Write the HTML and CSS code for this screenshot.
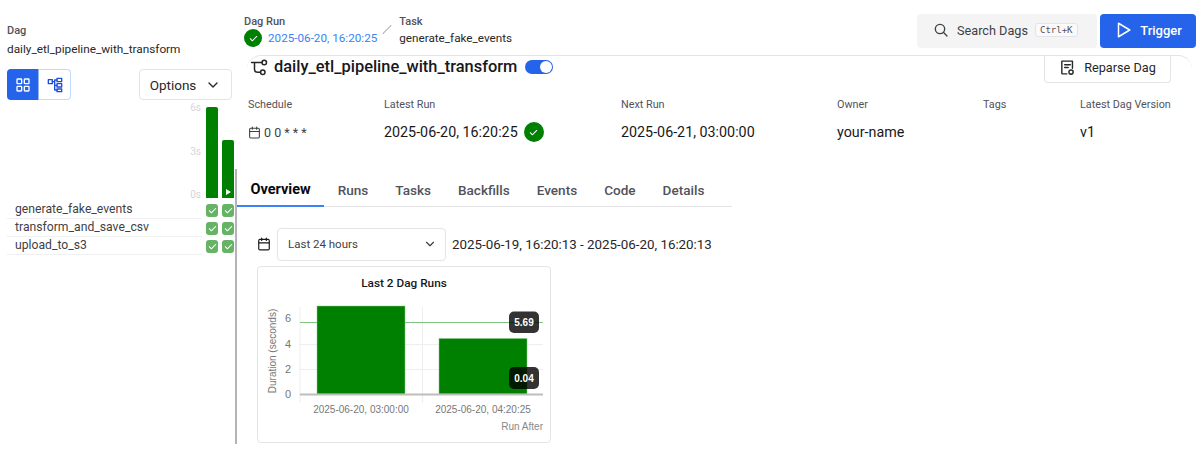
FILE: index.html
```html
<!DOCTYPE html>
<html lang="en">
<head>
  <meta charset="UTF-8">
  <title>daily_etl_pipeline_with_transform</title>
  <link rel="stylesheet" href="styles.css">
</head>
<body>
  <div class="app">
    <aside class="side">
      <div class="crumb-label">Dag</div>
      <div class="dag-name">daily_etl_pipeline_with_transform</div>

      <div class="side-tools">
        <div class="view-toggle">
          <button class="view-btn active" type="button">
            <svg viewBox="0 0 24 24" width="16" height="16" class="ico"><rect x="3" y="3" width="7" height="7" rx="1"/><rect x="14" y="3" width="7" height="7" rx="1"/><rect x="3" y="14" width="7" height="7" rx="1"/><rect x="14" y="14" width="7" height="7" rx="1"/></svg>
          </button>
          <button class="view-btn" type="button">
            <svg viewBox="0 0 24 24" width="16" height="16" class="ico"><rect x="2" y="4" width="6" height="6"/><rect x="15" y="2" width="7" height="5"/><rect x="15" y="10" width="7" height="5"/><rect x="15" y="18" width="7" height="4"/><path d="M8 7h3.500M11.500 4.500v15M11.500 4.500H15M11.500 12.500H15M11.500 19.500H15"/></svg>
          </button>
        </div>
        <button class="options-btn" type="button">Options
          <svg viewBox="0 0 24 24" width="16" height="16" class="ico"><path d="m6 9 6 6 6-6"/></svg>
        </button>
      </div>

      <div class="grid-chart">
        <div class="grid-axis"><span>6s</span><span>3s</span><span>0s</span></div>
        <div class="grid-bar tall"></div>
        <div class="grid-bar short"><span class="run-mark"></span></div>
      </div>

      <div class="task-list">
        <div class="task-row">
          <div class="task-name">generate_fake_events</div>
          <span class="task-state"><svg viewBox="0 0 24 24" class="tick"><path d="M5 12.500l4.500 4.500L19 7.500"/></svg></span>
          <span class="task-state"><svg viewBox="0 0 24 24" class="tick"><path d="M5 12.500l4.500 4.500L19 7.500"/></svg></span>
        </div>
        <div class="task-row">
          <div class="task-name">transform_and_save_csv</div>
          <span class="task-state"><svg viewBox="0 0 24 24" class="tick"><path d="M5 12.500l4.500 4.500L19 7.500"/></svg></span>
          <span class="task-state"><svg viewBox="0 0 24 24" class="tick"><path d="M5 12.500l4.500 4.500L19 7.500"/></svg></span>
        </div>
        <div class="task-row">
          <div class="task-name">upload_to_s3</div>
          <span class="task-state"><svg viewBox="0 0 24 24" class="tick"><path d="M5 12.500l4.500 4.500L19 7.500"/></svg></span>
          <span class="task-state"><svg viewBox="0 0 24 24" class="tick"><path d="M5 12.500l4.500 4.500L19 7.500"/></svg></span>
        </div>
      </div>
    </aside>

    <main class="main">
      <header class="topbar">
        <div class="crumb">
          <div class="crumb-label">Dag Run</div>
          <div class="crumb-value">
            <span class="state-dot small"><svg viewBox="0 0 24 24" class="tick"><path d="M5 12.500l4.500 4.500L19 7.500"/></svg></span>
            <a class="run-link" href="#">2025-06-20, 16:20:25</a>
          </div>
        </div>
        <div class="crumb-sep"></div>
        <div class="crumb">
          <div class="crumb-label">Task</div>
          <div class="crumb-value task-value">generate_fake_events</div>
        </div>
        <button class="search-btn" type="button">
          <svg viewBox="0 0 24 24" width="16" height="16" class="ico"><circle cx="10.500" cy="10.500" r="7"/><path d="m21 21-5.500-5.500"/></svg>
          Search Dags
          <kbd class="shortcut">Ctrl+K</kbd>
        </button>
        <button class="trigger-btn" type="button">
          <svg viewBox="0 0 24 24" width="18" height="18" class="ico"><path d="M6 3l15 9-15 9z"/></svg>
          Trigger
        </button>
      </header>

      <section class="summary">
        <div class="title-row">
          <svg viewBox="0 0 24 24" width="18" height="18" class="ico route"><circle cx="19" cy="6" r="3"/><circle cx="17" cy="19" r="3"/><path d="M16 6H2M6 6v9a4 4 0 0 0 4 4h4"/></svg>
          <h1 class="dag-title">daily_etl_pipeline_with_transform</h1>
          <span class="switch"><span class="knob"></span></span>
          <button class="reparse-btn" type="button">
            <svg viewBox="0 0 24 24" width="17" height="17" class="ico"><path d="M11 21H5a1 1 0 0 1-1-1V3h15v10"/><path d="M8 8h8M8 12h5"/><circle cx="17" cy="18.500" r="3"/></svg>
            Reparse Dag
          </button>
        </div>
        <div class="meta">
          <div class="meta-label">Schedule</div>
          <div class="meta-label">Latest Run</div>
          <div class="meta-label">Next Run</div>
          <div class="meta-label">Owner</div>
          <div class="meta-label">Tags</div>
          <div class="meta-label">Latest Dag Version</div>
          <div class="meta-value schedule">
            <svg viewBox="0 0 24 24" width="13" height="13" class="ico"><rect x="3" y="4" width="18" height="18" rx="2"/><path d="M16 2v4M8 2v4M3 10h18"/></svg>
            0 0 * * *
          </div>
          <div class="meta-value">2025-06-20, 16:20:25
            <span class="state-dot"><svg viewBox="0 0 24 24" class="tick"><path d="M5 12.500l4.500 4.500L19 7.500"/></svg></span>
          </div>
          <div class="meta-value">2025-06-21, 03:00:00</div>
          <div class="meta-value">your-name</div>
          <div class="meta-value"></div>
          <div class="meta-value">v1</div>
        </div>
      </section>

      <section class="dag-body">
        <nav class="tabs">
          <a class="tab active" href="#">Overview</a>
          <a class="tab" href="#">Runs</a>
          <a class="tab" href="#">Tasks</a>
          <a class="tab" href="#">Backfills</a>
          <a class="tab" href="#">Events</a>
          <a class="tab" href="#">Code</a>
          <a class="tab" href="#">Details</a>
        </nav>

        <div class="range-row">
          <svg viewBox="0 0 24 24" width="14" height="14" class="ico"><rect x="3" y="4" width="18" height="18" rx="2"/><path d="M16 2v4M8 2v4M3 10h18"/></svg>
          <div class="range-select">Last 24 hours
            <svg viewBox="0 0 24 24" width="14" height="14" class="ico"><path d="m6 9 6 6 6-6"/></svg>
          </div>
          <div class="range-text">2025-06-19, 16:20:13 - 2025-06-20, 16:20:13</div>
        </div>

        <div class="run-card">
          <h2 class="run-card-title">Last 2 Dag Runs</h2>
          <svg class="run-chart" viewBox="0 10 292 150" width="292" height="150">
            <g class="gridlines">
              <path d="M42 63.500H285M42 88.500H285M42 26V122M164.500 26V122"/>
            </g>
            <path class="avg-line" d="M42 41.500H285"/>
            <rect class="bar" x="59" y="25" width="88" height="88"/>
            <rect class="bar" x="181" y="57.500" width="88" height="55.500"/>
            <path class="baseline" d="M42 113.500H285"/>
            <g class="ticks">
              <text x="33" y="41">6</text>
              <text x="33" y="67">4</text>
              <text x="33" y="92">2</text>
              <text x="33" y="117">0</text>
            </g>
            <text class="axis-title" transform="translate(18 70) rotate(-90)">Duration (seconds)</text>
            <text class="x-label" x="103" y="132">2025-06-20, 03:00:00</text>
            <text class="x-label" x="225" y="132">2025-06-20, 04:20:25</text>
            <text class="run-after" x="285" y="149">Run After</text>
            <rect class="badge" x="251" y="30.500" width="30" height="21.500" rx="5"/>
            <text class="badge-text" x="266" y="45">5.69</text>
            <rect class="badge" x="251" y="86" width="30" height="22" rx="5"/>
            <text class="badge-text" x="266" y="101">0.04</text>
          </svg>
        </div>
      </section>
    </main>
  </div>
</body>
</html>
```

FILE: styles.css
```css
* {
  box-sizing: border-box;
}

body {
  margin: 0;
  font-family: Roboto, Arial, sans-serif;
  color: #18181b;
  background: #fff;
  overflow: hidden;
}

button {
  font-family: inherit;
  cursor: pointer;
}

a {
  text-decoration: none;
}

.ico {
  fill: none;
  stroke: currentColor;
  stroke-width: 2;
  stroke-linecap: round;
  stroke-linejoin: round;
  flex: none;
}

.tick {
  fill: none;
  stroke: #fff;
  stroke-width: 2.200;
  stroke-linecap: round;
  stroke-linejoin: round;
  width: 11px;
  height: 11px;
}

.app {
  display: grid;
  grid-template-columns: 236px 1fr;
  height: 452px;
}

/* left side */
.side {
  padding: 23px 4px 0 7px;
}

.crumb-label {
  font-size: 11px;
  line-height: 15px;
  font-weight: 500;
  color: #52525b;
}

.dag-name {
  font-size: 11.800px;
  line-height: 20px;
  margin-top: 1px;
  color: #27272a;
}

.side-tools {
  display: flex;
  justify-content: space-between;
  margin-top: 10px;
}

.view-toggle {
  display: flex;
}

.view-btn {
  width: 32px;
  height: 31px;
  padding: 0;
  display: flex;
  align-items: center;
  justify-content: center;
  color: #1d4ed8;
  background: #fff;
  border: 1px solid #bfdbfe;
  border-left: 0;
  border-radius: 0 4px 4px 0;
}

.view-btn.active {
  color: #fff;
  background: #2563eb;
  border: 0;
  border-right: 1px solid #93b4f5;
  border-radius: 4px 0 0 4px;
}

.options-btn {
  width: 93px;
  height: 31px;
  padding: 0;
  display: flex;
  align-items: center;
  justify-content: center;
  gap: 9px;
  font-size: 13.500px;
  color: #27272a;
  background: #fff;
  border: 1px solid #e4e4e7;
  border-radius: 4px;
}

.grid-chart {
  display: flex;
  justify-content: flex-end;
  align-items: flex-end;
  gap: 4px;
  height: 98px;
  margin-right: -2px;
}

.grid-axis {
  display: flex;
  flex-direction: column;
  justify-content: space-between;
  height: 101px;
  margin-right: 1px;
  margin-bottom: -4px;
  font-size: 10px;
  line-height: 14px;
  color: #d4d4d8;
  text-align: right;
}

.grid-bar {
  position: relative;
  width: 12px;
  background: #008000;
  border-radius: 2px 2px 0 0;
}

.grid-bar.tall {
  height: 91px;
}

.grid-bar.short {
  height: 58px;
}

.run-mark {
  position: absolute;
  left: 4px;
  bottom: 3px;
  border-left: 5px solid #fff;
  border-top: 3px solid transparent;
  border-bottom: 3px solid transparent;
}

.task-list {
  margin-top: 3px;
  margin-right: -2px;
}

.task-row {
  display: flex;
  align-items: center;
  gap: 4px;
  height: 18px;
}

.task-name {
  width: 196px;
  height: 18px;
  padding-left: 8px;
  font-size: 12.200px;
  line-height: 17px;
  color: #3f3f46;
  border-bottom: 1px solid #f0f0f2;
}

.task-state {
  width: 12px;
  height: 13px;
  display: flex;
  align-items: center;
  justify-content: center;
  background: #66b366;
  border-radius: 3px;
}

/* top bar */
.main {
  min-width: 0;
}

.topbar {
  display: flex;
  align-items: flex-start;
  height: 55px;
  padding: 14px 6px 0 8px;
}

.crumb-value {
  display: flex;
  align-items: center;
  gap: 6px;
  height: 18px;
  font-size: 11.700px;
}

.task-value {
  color: #27272a;
}

.run-link {
  color: #3b82f6;
}

.state-dot {
  display: inline-flex;
  align-items: center;
  justify-content: center;
  width: 20px;
  height: 20px;
  background: #008000;
  border-radius: 50%;
}

.state-dot.small {
  width: 18px;
  height: 18px;
}

.crumb-sep {
  width: 12px;
  height: 1px;
  margin: 15px 6px 0 4px;
  background: #a1a1aa;
  transform: rotate(-45deg);
}

.search-btn {
  display: flex;
  align-items: center;
  gap: 8px;
  width: 180px;
  height: 34px;
  margin-left: auto;
  padding: 0 0 2px 16px;
  font-size: 12.700px;
  color: #3f3f46;
  background: #f4f4f5;
  border: 0;
  border-radius: 4px;
}

.shortcut {
  margin-left: -1px;
  padding: 1px 4px;
  font-family: "DejaVu Sans Mono", monospace;
  font-size: 9px;
  color: #52525b;
  background: #fafafa;
  border: 1px solid #e4e4e7;
  border-radius: 3px;
}

.trigger-btn {
  display: flex;
  align-items: center;
  justify-content: center;
  gap: 8px;
  width: 96px;
  height: 34px;
  margin-left: 3px;
  padding: 0 0 2px;
  font-size: 13px;
  font-weight: 500;
  color: #fff;
  background: #2563eb;
  border: 0;
  border-radius: 4px;
}

/* dag summary */
.summary {
  height: 114px;
  margin: 0 10px 0 11px;
  border-top: 1px solid #e4e4e7;
  border-radius: 14px 14px 0 0;
}

.title-row {
  display: flex;
  align-items: center;
  height: 27px;
  padding: 0 21px 0 3px;
}

.route {
  color: #27272a;
  transform: translateY(-3px);
}

.dag-title {
  margin: 0 8px 0 6px;
  font-size: 16.400px;
  line-height: 20px;
  font-weight: 500;
  transform: translateY(-3px);
}

.switch {
  display: flex;
  align-items: center;
  justify-content: flex-end;
  width: 28px;
  height: 14px;
  padding-right: 1px;
  background: #2563eb;
  border-radius: 7px;
  transform: translateY(-3px);
}

.knob {
  width: 12px;
  height: 12px;
  background: #fff;
  border-radius: 50%;
}

.reparse-btn {
  display: flex;
  align-items: center;
  justify-content: center;
  gap: 8px;
  width: 127px;
  height: 27px;
  margin-left: auto;
  padding: 0 0 4px;
  font-size: 12.700px;
  color: #27272a;
  background: #fff;
  border: 1px solid #e4e4e7;
  border-top: 0;
  border-radius: 0 0 4px 4px;
}

.meta {
  display: grid;
  grid-template-columns: 136px 237px 216px 146px 97px 1fr;
  grid-template-rows: 21px 36px;
  margin-top: 14px;
  padding-left: 1px;
}

.meta-label {
  font-size: 10.800px;
  line-height: 15px;
  color: #52525b;
}

.meta-value {
  display: flex;
  align-items: center;
  gap: 6px;
  height: 28px;
  font-size: 14.300px;
  color: #18181b;
}

.meta-value.schedule {
  gap: 3px;
  font-size: 12.500px;
  color: #3f3f46;
}

/* dag body */
.dag-body {
  height: 275px;
  border-left: 2px solid #b4b4b8;
  margin-left: -1px;
  overflow: hidden;
}

.tabs {
  display: flex;
  width: 495px;
  height: 38px;
  border-bottom: 1px solid #e4e4e7;
}

.tab {
  height: 38px;
  padding: 12px 13.500px 0;
  font-size: 13.550px;
  line-height: 18px;
  font-weight: 500;
  color: #52525b;
}

.tab.active {
  font-size: 14.500px;
  font-weight: 700;
  color: #09090b;
  border-bottom: 2px solid #3b82f6;
}

.range-row {
  display: flex;
  align-items: center;
  height: 32px;
  margin: 21px 0 0 20px;
  gap: 6px;
}

.range-select {
  display: flex;
  align-items: center;
  justify-content: space-between;
  width: 169px;
  height: 33px;
  padding: 0 8px 0 10px;
  font-size: 11.500px;
  color: #3f3f46;
  border: 1px solid #e4e4e7;
  border-radius: 4px;
}

.range-text {
  font-size: 13.350px;
  color: #27272a;
}

.run-card {
  width: 294px;
  height: 177px;
  margin: 6px 0 0 20px;
  border: 1px solid #e4e4e7;
  border-radius: 4px;
}

.run-card-title {
  margin: 9px 0 0;
  font-size: 11.800px;
  line-height: 15px;
  font-weight: 500;
  text-align: center;
  color: #18181b;
}

.run-chart {
  display: block;
  font-family: "Liberation Sans", Arial, sans-serif;
}

.gridlines path {
  fill: none;
  stroke: #eeeeee;
  stroke-width: 1;
}

.bar {
  fill: #008000;
  stroke: #8cc68c;
  stroke-width: 0.500;
}

.baseline {
  stroke: #bdbdbd;
  stroke-width: 2;
}

.avg-line {
  stroke: #7fc47f;
  stroke-width: 1;
}

.ticks text {
  font-size: 11px;
  fill: #777;
  text-anchor: end;
}

.axis-title {
  font-size: 10px;
  fill: #777;
  text-anchor: middle;
}

.x-label {
  font-size: 10px;
  fill: #777;
  text-anchor: middle;
}

.run-after {
  font-size: 10px;
  fill: #888;
  text-anchor: end;
}

.badge {
  fill: rgba(0, 0, 0, 0.8);
}

.badge-text {
  font-size: 10px;
  font-weight: 700;
  fill: #fff;
  text-anchor: middle;
}
```
